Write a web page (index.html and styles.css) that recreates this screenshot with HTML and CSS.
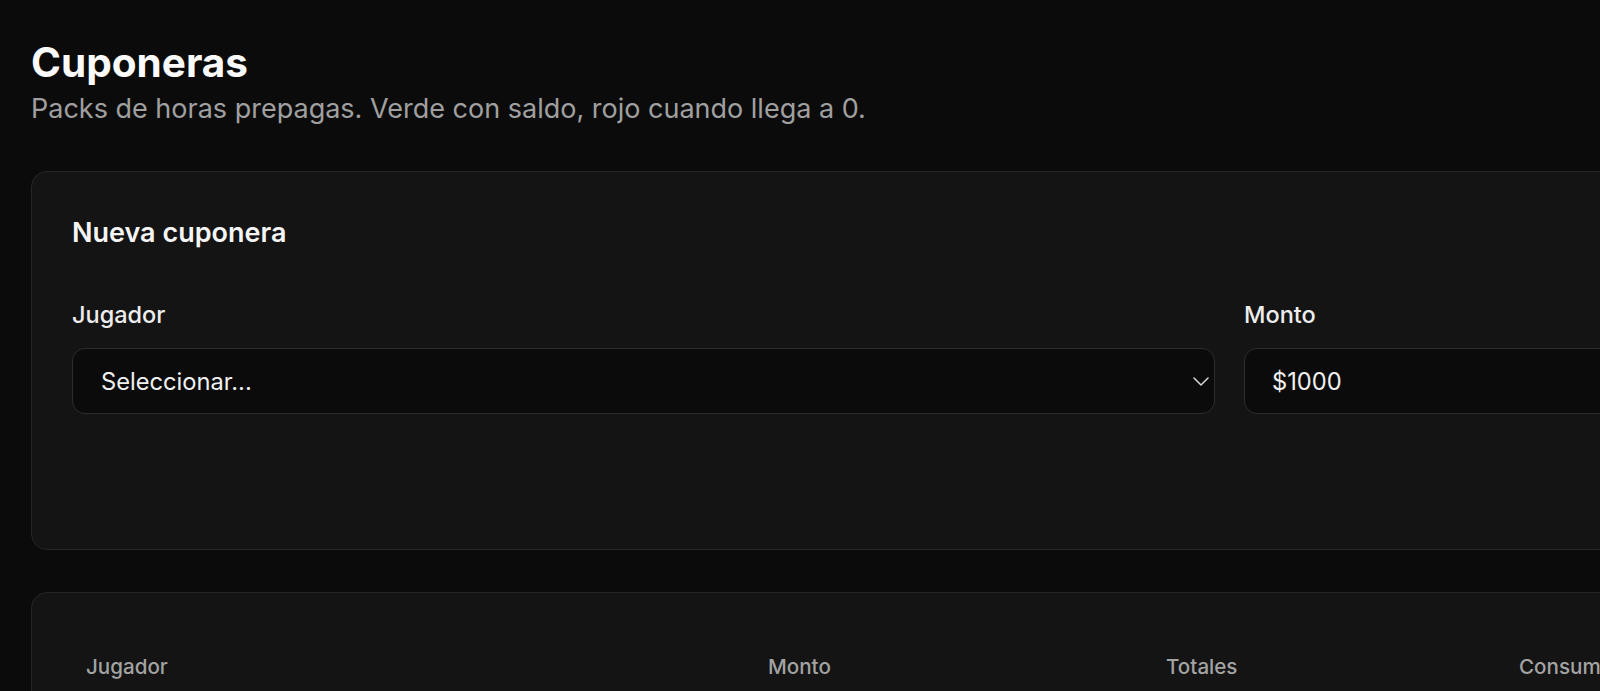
FILE: index.html
```html
<!DOCTYPE html>
<html lang="es">
<head>
<meta charset="utf-8">
<title>Cuponeras</title>
<link rel="stylesheet" href="styles.css">
</head>
<body>
<main class="page">
  <header class="page-header">
    <h1 class="page-title">Cuponeras</h1>
    <p class="page-subtitle">Packs de horas prepagas. Verde con saldo, rojo cuando llega a 0.</p>
  </header>

  <section class="card form-card">
    <h2 class="card-title">Nueva cuponera</h2>
    <div class="form-grid">
      <div class="field">
        <label class="field-label">Jugador</label>
        <div class="select">
          <span class="select-value">Seleccionar...</span>
          <svg class="select-chevron" width="16" height="9" viewBox="0 0 16 9" aria-hidden="true">
            <polyline points="1,1 8,8 15,1" fill="none" stroke="currentColor" stroke-width="1.5" stroke-linecap="round" stroke-linejoin="round"/>
          </svg>
        </div>
      </div>
      <div class="field">
        <label class="field-label">Monto</label>
        <input class="input" type="text" value="$1000">
      </div>
    </div>
  </section>

  <section class="card table-card">
    <table class="table">
      <colgroup>
        <col class="col-jugador">
        <col class="col-monto">
        <col class="col-totales">
        <col class="col-consumidas">
        <col class="col-saldo">
      </colgroup>
      <thead>
        <tr>
          <th>Jugador</th>
          <th>Monto</th>
          <th>Totales</th>
          <th>Consumidas</th>
          <th>Saldo</th>
        </tr>
      </thead>
    </table>
  </section>
</main>
</body>
</html>
```

FILE: styles.css
```css
html, body {
  margin: 0;
  padding: 0;
  overflow: hidden;
  background: #0b0b0b;
}

body {
  font-family: Inter, "Noto Sans", "Liberation Sans", sans-serif;
  color: #f5f5f5;
  width: 1600px;
  height: 691px;
}

.page {
  width: 1830px;
  padding: 40px 0 0 31px;
}

.page-header {
  margin-bottom: 42px;
}

.page-title {
  margin: 0;
  font-size: 40.5px;
  line-height: 45px;
  font-weight: 700;
  color: #fafafa;
}

.page-subtitle {
  margin: 4px 0 0;
  font-size: 27px;
  line-height: 40px;
  font-weight: 400;
  color: #a0a0a0;
}

.card {
  box-sizing: border-box;
  background: #141414;
  border: 1px solid #262626;
  border-radius: 16px;
  padding: 40px;
}

.form-card {
  min-height: 379px;
}

.card-title {
  margin: 0;
  font-size: 27px;
  line-height: 42px;
  font-weight: 600;
  color: #f5f5f5;
}

.form-grid {
  margin-top: 46px;
  display: grid;
  grid-template-columns: 1143px 1fr;
  column-gap: 29px;
}

.field {
  display: flex;
  flex-direction: column;
}

.field-label {
  font-size: 23.5px;
  line-height: 30px;
  font-weight: 500;
  color: #ededed;
  margin-bottom: 18px;
}

.select,
.input {
  box-sizing: border-box;
  height: 66px;
  background: #0b0b0b;
  border: 1px solid #2c2c2c;
  border-radius: 13px;
  font-family: Inter, "Noto Sans", "Liberation Sans", sans-serif;
  font-size: 23.7px;
  color: #f0f0f0;
}

.select {
  display: flex;
  align-items: center;
  justify-content: space-between;
  padding: 0 5px 0 28px;
}

.select-chevron {
  color: #d6d6d6;
  width: 16px;
  height: 9px;
}

.input {
  width: 100%;
  padding: 0 27px;
  outline: none;
}

.table-card {
  margin-top: 42px;
  min-height: 200px;
}

.table {
  width: 100%;
  border-collapse: collapse;
  table-layout: fixed;
}

.col-jugador { width: 682px; }
.col-monto { width: 398px; }
.col-totales { width: 353px; }
.col-consumidas { width: 160px; }

.table th {
  text-align: left;
  font-size: 20.6px;
  line-height: 30px;
  font-weight: 500;
  color: #a3a3a3;
  padding: 19px 14px;
  white-space: nowrap;
}
```
